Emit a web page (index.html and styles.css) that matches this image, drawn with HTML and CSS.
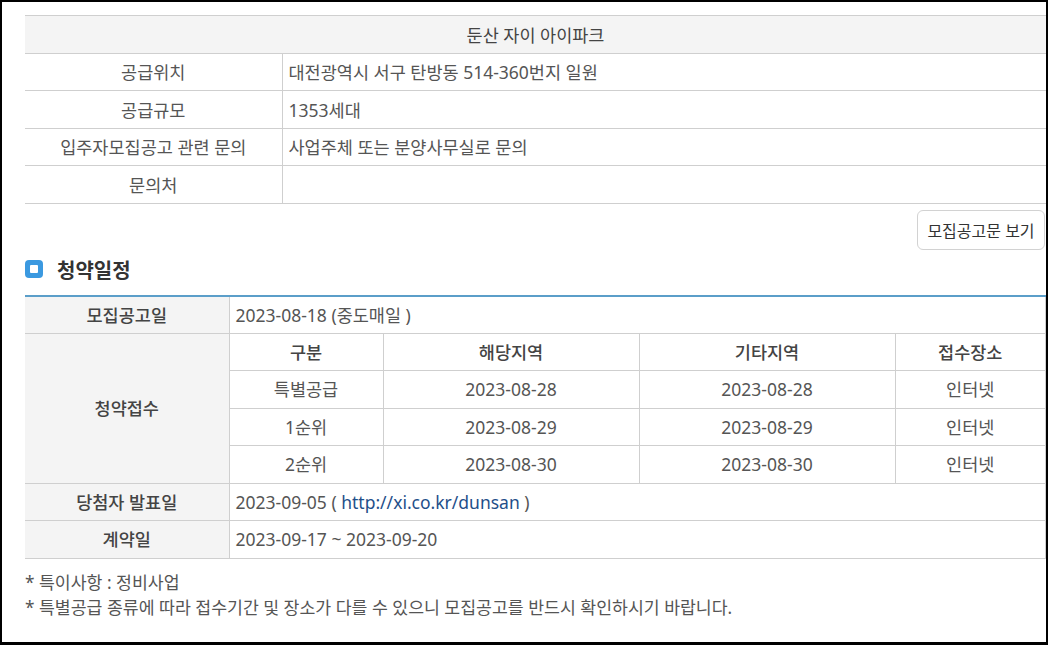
FILE: index.html
```html
<!DOCTYPE html>
<html lang="ko">
<head>
<meta charset="utf-8">
<title>둔산 자이 아이파크</title>
<link rel="stylesheet" href="styles.css">
</head>
<body>
<div class="frame">
  <table class="info">
    <colgroup><col class="c-label"><col></colgroup>
    <tr class="h38"><th colspan="2" class="title">둔산 자이 아이파크</th></tr>
    <tr class="h37"><th>공급위치</th><td>대전광역시 서구 탄방동 514-360번지 일원</td></tr>
    <tr class="h38"><th>공급규모</th><td>1353세대</td></tr>
    <tr class="h37"><th>입주자모집공고 관련 문의</th><td>사업주체 또는 분양사무실로 문의</td></tr>
    <tr class="h38"><th>문의처</th><td></td></tr>
  </table>

  <div class="btn-row">
    <button class="btn" type="button">모집공고문 보기</button>
  </div>

  <h2 class="sec-title"><span class="sec-icon"></span>청약일정</h2>

  <table class="sched">
    <colgroup>
      <col class="s1"><col class="s2"><col class="s3"><col class="s4"><col>
    </colgroup>
    <tr class="h37"><th class="lab">모집공고일</th><td colspan="4" class="left">2023-08-18 (중도매일 )</td></tr>
    <tr class="h37"><th class="lab" rowspan="4">청약접수</th><th class="sub">구분</th><th class="sub">해당지역</th><th class="sub">기타지역</th><th class="sub">접수장소</th></tr>
    <tr class="h38"><td>특별공급</td><td>2023-08-28</td><td>2023-08-28</td><td>인터넷</td></tr>
    <tr class="h37"><td>1순위</td><td>2023-08-29</td><td>2023-08-29</td><td>인터넷</td></tr>
    <tr class="h38"><td>2순위</td><td>2023-08-30</td><td>2023-08-30</td><td>인터넷</td></tr>
    <tr class="h37"><th class="lab">당첨자 발표일</th><td colspan="4" class="left">2023-09-05 ( <a href="#" class="link">http://xi.co.kr/dunsan</a> )</td></tr>
    <tr class="h38"><th class="lab">계약일</th><td colspan="4" class="left">2023-09-17 ~ 2023-09-20</td></tr>
  </table>

  <div class="notes">
    <p>* 특이사항 : 정비사업</p>
    <p>* 특별공급 종류에 따라 접수기간 및 장소가 다를 수 있으니 모집공고를 반드시 확인하시기 바랍니다.</p>
  </div>
</div>
</body>
</html>
```

FILE: styles.css
```css
* { box-sizing: border-box; }
html, body { margin: 0; padding: 0; background: #fff; }
body {
  font-family: "Noto Sans", "Noto Sans CJK KR", sans-serif;
  font-size: 17px;
  color: #555;
}
.frame {
  width: 1048px;
  height: 645px;
  border: 2px solid #000;
  border-bottom-width: 3px;
  padding: 13px 0 0 23px;
  overflow: hidden;
}
table {
  border-collapse: collapse;
  width: 100%;
  table-layout: fixed;
}
th, td {
  padding: 0 6px;
  font-size: 17.5px;
  font-weight: 400;
  line-height: 20px;
  vertical-align: middle;
  white-space: nowrap;
}
.h37 { height: 37px; }
.h38 { height: 38px; }

.info { border-top: 1px solid #cfcfcf; }
.info th, .info td { border-bottom: 1px solid #cfcfcf; }
.info .c-label { width: 257px; }
.info th { text-align: center; color: #555; border-right: 1px solid #cfcfcf; }
.info td { text-align: left; }
.info th.title { background: #f4f4f4; color: #444; border-right: 0; }

.btn-row { display: flex; justify-content: flex-end; padding-top: 6px; }
.btn {
  width: 128px;
  height: 40px;
  margin-right: 1px;
  background: #fff;
  border: 1px solid #d2d2d2;
  border-radius: 6px;
  font-family: inherit;
  font-size: 16px;
  color: #333;
  padding: 0;
}

.sec-title {
  display: flex;
  align-items: center;
  height: 38px;
  margin: 0 0 7px;
  font-size: 20px;
  font-weight: 700;
  color: #333;
}
.sec-icon {
  width: 18px;
  height: 18px;
  margin-right: 14px;
  border-radius: 4px;
  background: #3b99e0;
  display: flex;
  align-items: center;
  justify-content: center;
}
.sec-icon::after {
  content: "";
  width: 8px;
  height: 8px;
  background: #fff;
  border-radius: 1px;
}

.sched { border-top: 2px solid #5b9ec9; }
.sched th, .sched td { border: 1px solid #cfcfcf; text-align: center; }
.sched tr:first-child th, .sched tr:first-child td { border-top: 0; }
.sched th:first-child, .sched td:first-child { border-left: 0; }
.sched .s1 { width: 204px; }
.sched .s2 { width: 154px; }
.sched .s3 { width: 256px; }
.sched .s4 { width: 256px; }
.sched th.lab { background: #f4f4f4; font-weight: 500; color: #444; }
.sched th.sub { font-weight: 500; color: #444; }
.sched td.left { text-align: left; }
.link { color: #1f4f8a; text-decoration: none; }

.notes {
  margin-top: 11px;
  font-size: 17.25px;
  color: #555;
}
.notes p { margin: 0; line-height: 25px; }
```
